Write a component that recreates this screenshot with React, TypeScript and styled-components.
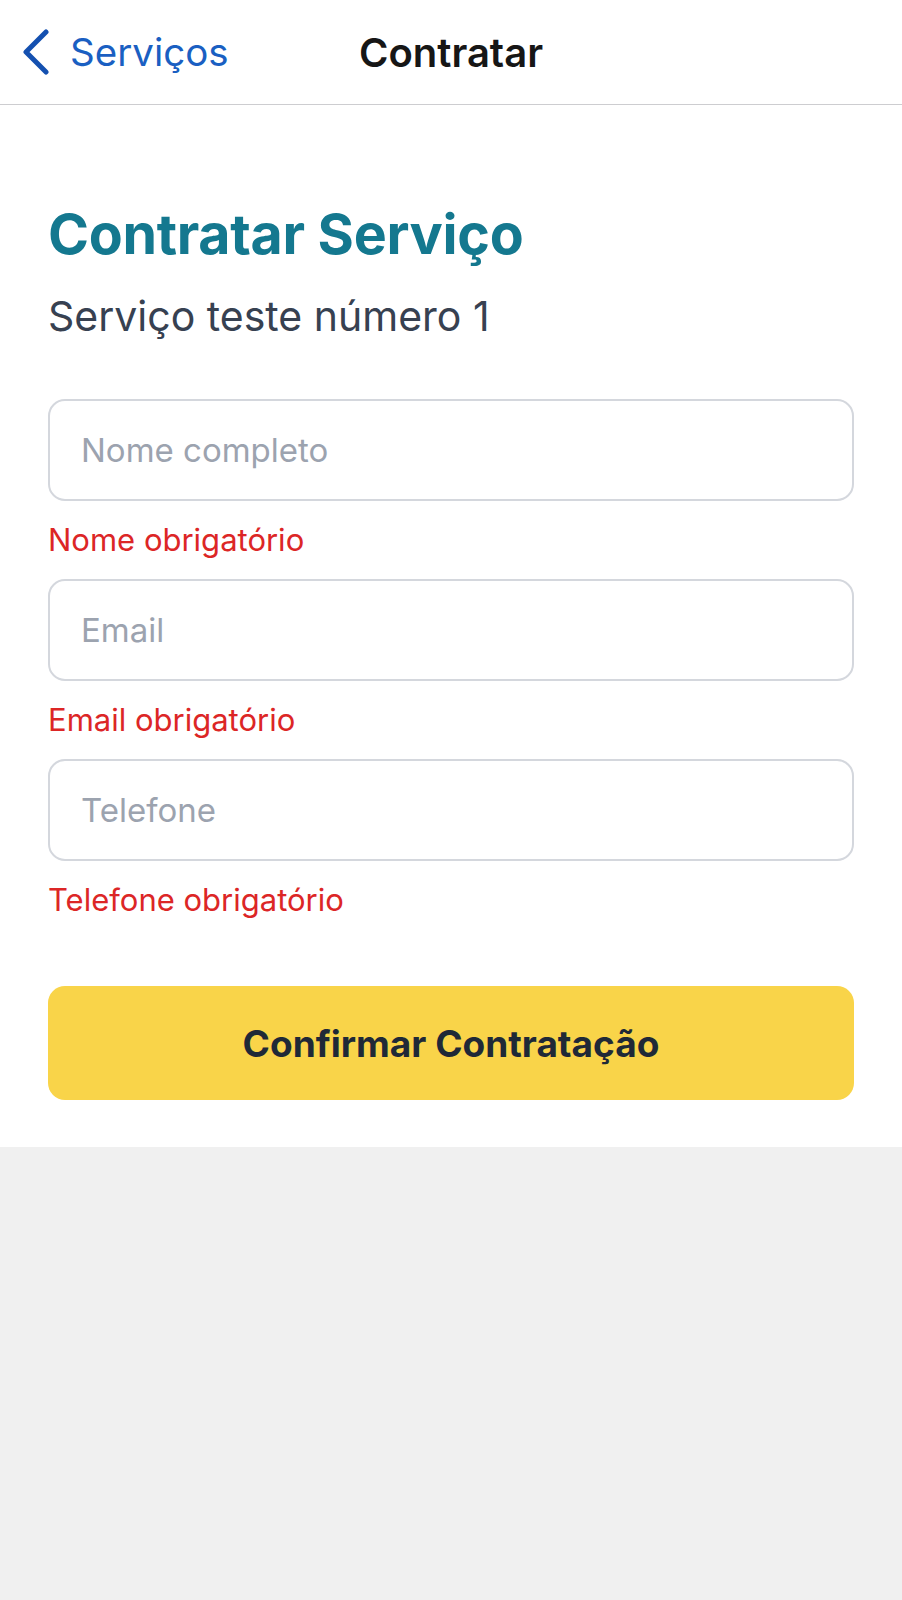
import React from "react";
import styled, { createGlobalStyle } from "styled-components";

const GlobalStyle = createGlobalStyle`
  html, body {
    margin: 0;
    padding: 0;
    background: #f0f0f0;
    font-family: Inter, "Noto Sans", "Liberation Sans", sans-serif;
  }
  * { box-sizing: border-box; }
`;

const Header = styled.header`
  display: grid;
  grid-template-columns: 1fr auto 1fr;
  align-items: center;
  height: 105px;
  background: #ffffff;
  border-bottom: 1px solid #cdcdd0;
`;

const BackButton = styled.button`
  justify-self: start;
  display: flex;
  align-items: center;
  gap: 20px;
  padding: 0 0 0 22px;
  border: none;
  background: transparent;
  color: #1a5fc2;
  font-family: inherit;
  font-size: 38.5px;
  font-weight: 400;
  cursor: pointer;
`;

const HeaderTitle = styled.h1`
  margin: 0;
  font-size: 40px;
  font-weight: 600;
  color: #161616;
`;

const Main = styled.main`
  display: flex;
  flex-direction: column;
  background: #ffffff;
  padding: 96px 48px 47px 48px;
`;

const Title = styled.h2`
  margin: 0;
  font-size: 55.5px;
  line-height: 66px;
  font-weight: 700;
  color: #14788f;
  letter-spacing: -0.3px;
`;

const Subtitle = styled.p`
  margin: 24px 0 58px 0;
  font-size: 41px;
  line-height: 50px;
  font-weight: 400;
  color: #374151;
`;

const Form = styled.form`
  display: flex;
  flex-direction: column;
`;

const Field = styled.div<{ $last?: boolean }>`
  display: flex;
  flex-direction: column;
  margin-bottom: ${(p) => (p.$last ? "67px" : "20px")};
`;

const Input = styled.input`
  width: 100%;
  height: 102px;
  padding: 0 31px;
  border: 2px solid #d4d7dd;
  border-radius: 17px;
  background: #ffffff;
  font-family: inherit;
  font-size: 33px;
  color: #111827;
  outline: none;
  &::placeholder {
    color: #9ca3af;
  }
`;

const ErrorText = styled.span`
  margin-top: 20px;
  font-size: 31px;
  line-height: 38px;
  color: #dc2626;
`;

const SubmitButton = styled.button`
  width: 100%;
  height: 114px;
  border: none;
  border-radius: 17px;
  background: #f9d449;
  color: #1f2937;
  font-family: inherit;
  font-size: 37px;
  font-weight: 700;
  cursor: pointer;
`;

const Chevron = () => (
  <svg width="28" height="46" viewBox="0 0 28 46" fill="none">
    <polyline
      points="24,3 4,23 24,43"
      stroke="#1450b0"
      strokeWidth="5"
      strokeLinecap="round"
      strokeLinejoin="round"
    />
  </svg>
);

const fields = [
  { placeholder: "Nome completo", error: "Nome obrigatório" },
  { placeholder: "Email", error: "Email obrigatório" },
  { placeholder: "Telefone", error: "Telefone obrigatório" },
];

export default function App() {
  return (
    <>
      <GlobalStyle />
      <Header>
        <BackButton type="button">
          <Chevron />
          Serviços
        </BackButton>
        <HeaderTitle>Contratar</HeaderTitle>
        <div />
      </Header>
      <Main>
        <Title>Contratar Serviço</Title>
        <Subtitle>Serviço teste número 1</Subtitle>
        <Form onSubmit={(e) => e.preventDefault()}>
          {fields.map((f, i) => (
            <Field key={f.placeholder} $last={i === fields.length - 1}>
              <Input placeholder={f.placeholder} />
              <ErrorText>{f.error}</ErrorText>
            </Field>
          ))}
          <SubmitButton type="submit">Confirmar Contratação</SubmitButton>
        </Form>
      </Main>
    </>
  );
}
